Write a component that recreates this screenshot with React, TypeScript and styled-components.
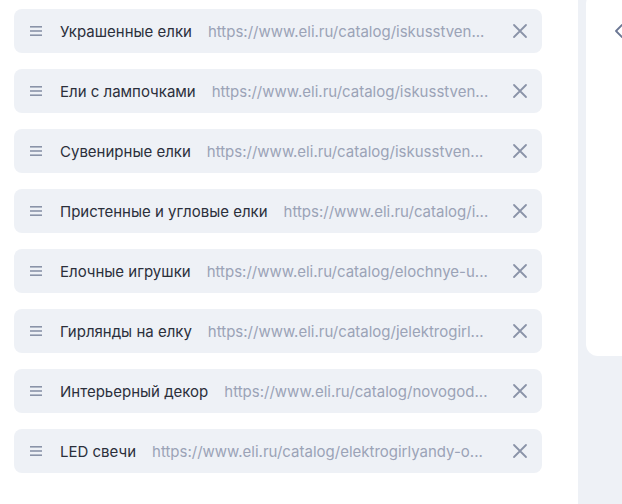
import styled, { createGlobalStyle } from "styled-components";

const rowBg = "#eef1f6";
const mutedText = "#9ba3b7";
const iconColor = "#8a93a8";

const GlobalStyle = createGlobalStyle`
  html, body {
    margin: 0;
    padding: 0;
    background: #ffffff;
  }
  body {
    font-family: Inter, "Noto Sans", Arial, sans-serif;
    -webkit-font-smoothing: antialiased;
  }
`;

const Page = styled.div`
  display: flex;
  width: 622px;
  height: 504px;
  overflow: hidden;
`;

const ListPanel = styled.div`
  width: 578px;
  flex-shrink: 0;
  background: #ffffff;
  padding: 9px 36px 0 14px;
  box-sizing: border-box;
  display: flex;
  flex-direction: column;
  gap: 16px;
`;

const Side = styled.div`
  flex: 1;
  background: ${rowBg};
  padding-left: 8px;
`;

const SideCard = styled.div`
  margin-top: -8px;
  height: 364px;
  background: #ffffff;
  border-radius: 12px 0 0 12px;
  padding: 30px 0 0 28px;
  box-sizing: border-box;
  color: #6b7794;
`;

const Row = styled.div`
  height: 44px;
  background: ${rowBg};
  border-radius: 8px;
  display: flex;
  align-items: center;
  padding: 0 14px 0 16px;
  box-sizing: border-box;
`;

const Handle = styled.span`
  display: flex;
  color: ${iconColor};
  margin-right: 18px;
`;

const Title = styled.span`
  font-size: 15px;
  color: #2b2f3b;
  white-space: nowrap;
  margin-right: 16px;
`;

const Url = styled.span`
  flex: 1;
  min-width: 0;
  font-size: 15px;
  color: ${mutedText};
  white-space: nowrap;
  overflow: hidden;
  text-overflow: ellipsis;
  margin-right: 16px;
`;

const CloseButton = styled.button`
  border: 0;
  background: none;
  padding: 0;
  display: flex;
  color: ${iconColor};
  cursor: pointer;
`;

const HandleIcon = () => (
  <svg width="12" height="10" viewBox="0 0 12 10">
    <rect x="0" y="0" width="12" height="1.6" fill="currentColor" />
    <rect x="0" y="4.2" width="12" height="1.6" fill="currentColor" />
    <rect x="0" y="8.4" width="12" height="1.6" fill="currentColor" />
  </svg>
);

const CloseIcon = () => (
  <svg width="16" height="16" viewBox="0 0 16 16">
    <path
      d="M2 2 L14 14 M14 2 L2 14"
      stroke="currentColor"
      strokeWidth="1.8"
      strokeLinecap="round"
    />
  </svg>
);

const Chevron = () => (
  <svg width="10" height="14" viewBox="0 0 10 14">
    <path
      d="M8 1 L2 7 L8 13"
      stroke="currentColor"
      strokeWidth="1.8"
      fill="none"
      strokeLinecap="round"
      strokeLinejoin="round"
    />
  </svg>
);

const items = [
  { title: "Украшенные елки", url: "https://www.eli.ru/catalog/iskusstven..." },
  { title: "Ели с лампочками", url: "https://www.eli.ru/catalog/iskusstven..." },
  { title: "Сувенирные елки", url: "https://www.eli.ru/catalog/iskusstven..." },
  { title: "Пристенные и угловые елки", url: "https://www.eli.ru/catalog/i..." },
  { title: "Елочные игрушки", url: "https://www.eli.ru/catalog/elochnye-u..." },
  { title: "Гирлянды на елку", url: "https://www.eli.ru/catalog/jelektrogirl..." },
  { title: "Интерьерный декор", url: "https://www.eli.ru/catalog/novogod..." },
  { title: "LED свечи", url: "https://www.eli.ru/catalog/elektrogirlyandy-o..." },
];

export default function App() {
  return (
    <>
      <GlobalStyle />
      <Page>
        <ListPanel>
          {items.map((item) => (
            <Row key={item.title}>
              <Handle>
                <HandleIcon />
              </Handle>
              <Title>{item.title}</Title>
              <Url>{item.url}</Url>
              <CloseButton aria-label="Удалить">
                <CloseIcon />
              </CloseButton>
            </Row>
          ))}
        </ListPanel>
        <Side>
          <SideCard>
            <Chevron />
          </SideCard>
        </Side>
      </Page>
    </>
  );
}
